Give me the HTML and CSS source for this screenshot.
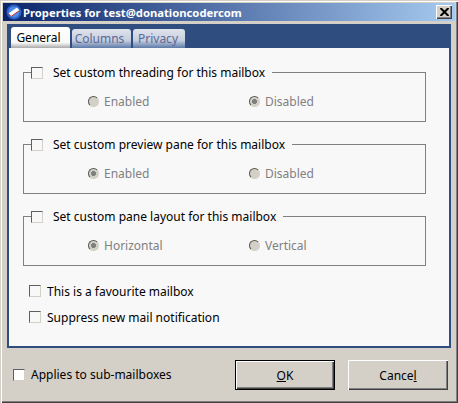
FILE: index.html
```html
<!DOCTYPE html>
<html lang="en">
<head>
    <meta charset="UTF-8">
    <title>Properties for test@donationcoder.com</title>
    <link rel="stylesheet" href="styles.css">
</head>
<body>
    <div class="window">
        <div class="titlebar">
            <svg class="app-icon" width="16" height="16" viewBox="0 0 16 16">
                <circle cx="8" cy="8" r="7.5" fill="#2a62c8"/>
                <circle cx="8" cy="8" r="5.5" fill="#4f8be8"/>
                <path d="M2.5 9.5L11 3.5L13.5 6.5L5 12.5Z" fill="#fff"/>
                <path d="M2.5 9.5L5 12.5L13.5 6.5" fill="none" stroke="#c03a3a" stroke-width="1"/>
            </svg>
            <span class="title">Properties for test@donationcodercom</span>
            <button class="close-btn">
                <svg width="9" height="8" viewBox="0 0 9 8">
                    <path d="M0.5 0L8.5 8M8.5 0L0.5 8" stroke="#000" stroke-width="2"/>
                </svg>
            </button>
        </div>

        <div class="panel">
            <div class="tabs">
                <div class="tab active">General</div>
                <div class="tab">Columns</div>
                <div class="tab">Privacy</div>
            </div>
            <div class="page">
                <fieldset class="group">
                    <legend><span class="check"></span>Set custom threading for this mailbox</legend>
                    <div class="radio-row">
                        <div class="radio-item"><span class="radio"></span>Enabled</div>
                        <div class="radio-item"><span class="radio on"></span>Disabled</div>
                    </div>
                </fieldset>
                <fieldset class="group">
                    <legend><span class="check"></span>Set custom preview pane for this mailbox</legend>
                    <div class="radio-row">
                        <div class="radio-item"><span class="radio on"></span>Enabled</div>
                        <div class="radio-item"><span class="radio"></span>Disabled</div>
                    </div>
                </fieldset>
                <fieldset class="group">
                    <legend><span class="check"></span>Set custom pane layout for this mailbox</legend>
                    <div class="radio-row">
                        <div class="radio-item"><span class="radio on"></span>Horizontal</div>
                        <div class="radio-item"><span class="radio"></span>Vertical</div>
                    </div>
                </fieldset>
                <div class="option"><span class="check"></span>This is a favourite mailbox</div>
                <div class="option"><span class="check"></span>Suppress new mail notification</div>
            </div>
        </div>

        <div class="footer">
            <div class="applies"><span class="check white"></span>Applies to sub-mailboxes</div>
            <button class="btn default"><u>O</u>K</button>
            <button class="btn">Cance<u>l</u></button>
        </div>
    </div>
</body>
</html>
```

FILE: styles.css
```css
html, body {
    margin: 0;
    padding: 0;
    background: #d4d0c8;
}
.window {
    width: 458px;
    height: 403px;
    box-sizing: border-box;
    padding: 3px 3px 2px;
    background: #d4d0c8;
    box-shadow: inset 1px 1px 0 #d4d0c8, inset 2px 2px 0 #fff, inset -1px -1px 0 #404040, inset -2px -2px 0 #808080;
    font-family: "Noto Sans", sans-serif;
    font-size: 12px;
    color: #000;
    display: flex;
    flex-direction: column;
}
.titlebar {
    height: 18px;
    flex: none;
    display: flex;
    align-items: center;
    padding: 0 3px 0 3px;
    background: linear-gradient(to right, #0a246a, #a6caf0);
}
.app-icon {
    flex: none;
    margin-right: 1px;
}
.title {
    flex: 1;
    color: #fff;
    font-weight: bold;
    font-size: 11.25px;
    white-space: nowrap;
}
.close-btn {
    width: 16px;
    height: 14px;
    padding: 0;
    border: none;
    background: #d4d0c8;
    box-shadow: inset 1px 1px 0 #fff, inset -1px -1px 0 #404040, inset -2px -2px 0 #808080;
    display: flex;
    align-items: center;
    justify-content: center;
}
.panel {
    margin: 3px 4px 0;
    height: 324px;
    flex: none;
    box-sizing: border-box;
    border: 2px solid #2f4d7e;
    background: #2f4d7e;
    display: flex;
    flex-direction: column;
}
.tabs {
    height: 22px;
    flex: none;
    display: flex;
    align-items: flex-end;
    gap: 2px;
    padding-left: 2px;
}
.tab {
    width: 59px;
    height: 19px;
    box-sizing: border-box;
    padding: 1px 4px 0 0;
    text-align: center;
    border-radius: 3px 3px 0 0;
    color: #5a6a96;
    background: linear-gradient(to bottom, #dfe3ec 0, #c6cede 60%, #5d7aa8 100%);
}
.tab:last-child {
    width: 52px;
    padding-right: 2px;
}
.tab.active {
    height: 21px;
    padding-top: 2px;
    color: #000;
    background: linear-gradient(to bottom, #fff 0, #f8f8f8 75%, #a8a8a8 100%);
}
.page {
    flex: 1;
    background: #f8f8f8;
    padding: 18px 23px 0 14px;
}
.group {
    margin: 0 0 16px;
    padding: 0;
    height: 56px;
    box-sizing: border-box;
    border: 1px solid #808080;
    min-width: 0;
}
.group legend {
    margin-left: 7px;
    padding: 0 7px 0 0;
    display: flex;
    align-items: center;
    height: 13px;
}
.check {
    display: inline-block;
    flex: none;
    width: 12px;
    height: 12px;
    box-sizing: border-box;
    margin-right: 10px;
    border: 1px solid;
    border-color: #606060 #d4d0c8 #d4d0c8 #606060;
    background: #f8f8f8;
}
.check.white {
    background: #fff;
    margin-right: 6px;
}
.radio-row {
    display: flex;
    padding: 14px 0 0 64px;
}
.radio-item {
    width: 161px;
    display: flex;
    align-items: center;
    color: #808080;
}
.radio {
    flex: none;
    width: 11px;
    height: 11px;
    box-sizing: border-box;
    margin-right: 5px;
    border-radius: 50%;
    border: 1px solid;
    border-color: #555 #d4d0c8 #d4d0c8 #555;
    background: #d4d0c8;
}
.radio.on {
    background: radial-gradient(circle, #808080 0, #808080 2.4px, #d4d0c8 2.8px);
}
.option {
    display: flex;
    align-items: center;
    height: 14px;
    margin: 0 0 12px 6px;
}
.option:first-of-type {
    margin-top: 18px;
}
.option .check {
    margin-right: 6px;
}
.footer {
    flex: 1;
    display: flex;
    align-items: flex-start;
    padding: 12px 7px 0 10px;
}
.applies {
    display: flex;
    align-items: center;
    flex: 1;
    margin-top: 6px;
}
.btn {
    width: 100px;
    height: 30px;
    margin-left: 13px;
    padding: 0;
    border: none;
    font: inherit;
    color: #000;
    background: #d4d0c8;
    box-shadow: inset 1px 1px 0 #fff, inset -1px -1px 0 #404040, inset -2px -2px 0 #808080;
}
.btn.default {
    box-shadow: inset 0 0 0 1px #000, inset 2px 2px 0 #fff, inset -2px -2px 0 #404040, inset -3px -3px 0 #808080;
}
```
